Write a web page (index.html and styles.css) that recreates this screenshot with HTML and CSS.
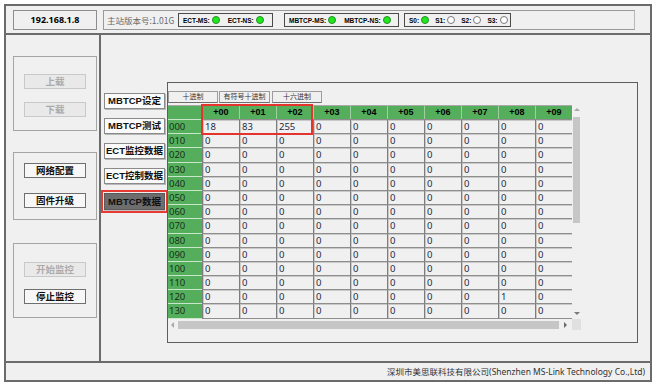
FILE: index.html
```html
<!DOCTYPE html>
<html lang="zh-CN">

<head>
    <meta charset="UTF-8">
    <meta name="viewport" content="width=device-width, initial-scale=1.0">
    <title>MBTCP数据</title>
    <link rel="stylesheet" href="styles.css">
</head>

<body>
    <div class="app">
        <!-- Top status bar -->
        <header class="topbar">
            <div class="ip-box">192.168.1.8</div>
            <div class="status-box">
                <span class="version">主站版本号:1.01G</span>
                <div class="leds leds-ect">
                    <span class="led-label">ECT-MS:</span><span class="led on"></span>
                    <span class="led-label next">ECT-NS:</span><span class="led on"></span>
                </div>
                <div class="leds leds-mbtcp">
                    <span class="led-label">MBTCP-MS:</span><span class="led on"></span>
                    <span class="led-label next">MBTCP-NS:</span><span class="led on"></span>
                </div>
                <div class="leds leds-slot">
                    <span class="led-label">S0:</span><span class="led on"></span>
                    <span class="led-label next">S1:</span><span class="led"></span>
                    <span class="led-label next">S2:</span><span class="led"></span>
                    <span class="led-label next">S3:</span><span class="led"></span>
                </div>
            </div>
        </header>

        <div class="main">
            <!-- Left command panel -->
            <aside class="side">
                <div class="group group-load">
                    <button class="btn off">上载</button>
                    <button class="btn off">下载</button>
                </div>
                <div class="group group-config">
                    <button class="btn">网络配置</button>
                    <button class="btn">固件升级</button>
                </div>
                <div class="group group-monitor">
                    <button class="btn off">开始监控</button>
                    <button class="btn">停止监控</button>
                </div>
            </aside>

            <section class="content">
                <nav class="nav">
                    <button class="nav-btn">MBTCP设定</button>
                    <button class="nav-btn">MBTCP测试</button>
                    <button class="nav-btn">ECT监控数据</button>
                    <button class="nav-btn">ECT控制数据</button>
                    <button class="nav-btn active">MBTCP数据</button>
                </nav>

                <div class="panel">
                    <div class="radix">
                        <span class="radix-tab w50">十进制</span>
                        <span class="radix-tab w51">有符号十进制</span>
                        <span class="radix-tab w50 last">十六进制</span>
                    </div>

                    <div class="sheet">
                        <div class="view">
                            <div class="cells">
                                <div class="hc"></div><div class="h">+00</div><div class="h">+01</div><div class="h">+02</div><div class="h">+03</div><div class="h">+04</div><div class="h">+05</div><div class="h">+06</div><div class="h">+07</div><div class="h">+08</div><div class="h">+09</div>
                                <div class="r">000</div><div class="c">18</div><div class="c">83</div><div class="c">255</div><div class="c">0</div><div class="c">0</div><div class="c">0</div><div class="c">0</div><div class="c">0</div><div class="c">0</div><div class="c">0</div>
                                <div class="r">010</div><div class="c">0</div><div class="c">0</div><div class="c">0</div><div class="c">0</div><div class="c">0</div><div class="c">0</div><div class="c">0</div><div class="c">0</div><div class="c">0</div><div class="c">0</div>
                                <div class="r">020</div><div class="c">0</div><div class="c">0</div><div class="c">0</div><div class="c">0</div><div class="c">0</div><div class="c">0</div><div class="c">0</div><div class="c">0</div><div class="c">0</div><div class="c">0</div>
                                <div class="r">030</div><div class="c">0</div><div class="c">0</div><div class="c">0</div><div class="c">0</div><div class="c">0</div><div class="c">0</div><div class="c">0</div><div class="c">0</div><div class="c">0</div><div class="c">0</div>
                                <div class="r">040</div><div class="c">0</div><div class="c">0</div><div class="c">0</div><div class="c">0</div><div class="c">0</div><div class="c">0</div><div class="c">0</div><div class="c">0</div><div class="c">0</div><div class="c">0</div>
                                <div class="r">050</div><div class="c">0</div><div class="c">0</div><div class="c">0</div><div class="c">0</div><div class="c">0</div><div class="c">0</div><div class="c">0</div><div class="c">0</div><div class="c">0</div><div class="c">0</div>
                                <div class="r">060</div><div class="c">0</div><div class="c">0</div><div class="c">0</div><div class="c">0</div><div class="c">0</div><div class="c">0</div><div class="c">0</div><div class="c">0</div><div class="c">0</div><div class="c">0</div>
                                <div class="r">070</div><div class="c">0</div><div class="c">0</div><div class="c">0</div><div class="c">0</div><div class="c">0</div><div class="c">0</div><div class="c">0</div><div class="c">0</div><div class="c">0</div><div class="c">0</div>
                                <div class="r">080</div><div class="c">0</div><div class="c">0</div><div class="c">0</div><div class="c">0</div><div class="c">0</div><div class="c">0</div><div class="c">0</div><div class="c">0</div><div class="c">0</div><div class="c">0</div>
                                <div class="r">090</div><div class="c">0</div><div class="c">0</div><div class="c">0</div><div class="c">0</div><div class="c">0</div><div class="c">0</div><div class="c">0</div><div class="c">0</div><div class="c">0</div><div class="c">0</div>
                                <div class="r">100</div><div class="c">0</div><div class="c">0</div><div class="c">0</div><div class="c">0</div><div class="c">0</div><div class="c">0</div><div class="c">0</div><div class="c">0</div><div class="c">0</div><div class="c">0</div>
                                <div class="r">110</div><div class="c">0</div><div class="c">0</div><div class="c">0</div><div class="c">0</div><div class="c">0</div><div class="c">0</div><div class="c">0</div><div class="c">0</div><div class="c">0</div><div class="c">0</div>
                                <div class="r">120</div><div class="c">0</div><div class="c">0</div><div class="c">0</div><div class="c">0</div><div class="c">0</div><div class="c">0</div><div class="c">0</div><div class="c">0</div><div class="c">1</div><div class="c">0</div>
                                <div class="r">130</div><div class="c">0</div><div class="c">0</div><div class="c">0</div><div class="c">0</div><div class="c">0</div><div class="c">0</div><div class="c">0</div><div class="c">0</div><div class="c">0</div><div class="c">0</div>
                                <!-- next row, only its top edge is in view -->
                                <div class="r"></div><div class="c"></div><div class="c"></div><div class="c"></div><div class="c"></div><div class="c"></div><div class="c"></div><div class="c"></div><div class="c"></div><div class="c"></div><div class="c"></div>
                            </div>
                        </div>

                        <!-- Scrollbars -->
                        <div class="vscroll">
                            <span class="arrow arrow-up"></span>
                            <span class="vthumb"></span>
                            <span class="arrow arrow-down"></span>
                        </div>
                        <div class="hscroll">
                            <span class="arrow arrow-left"></span>
                            <span class="hthumb"></span>
                            <span class="arrow arrow-right"></span>
                        </div>
                        <div class="corner"></div>

                        <!-- Highlight of the first three registers -->
                        <div class="mark"></div>
                    </div>
                </div>
            </section>
        </div>

        <footer class="footer">深圳市美思联科技有限公司(Shenzhen MS-Link Technology Co.,Ltd)</footer>
    </div>
</body>

</html>
```

FILE: styles.css
```css
/* General Reset */
* {
    margin: 0;
    padding: 0;
    box-sizing: border-box;
}

body {
    background: #fff;
    font-family: "Noto Sans", "Noto Sans CJK SC", sans-serif;
    color: #000;
}

button {
    font-family: "Liberation Sans", "Noto Sans CJK SC", sans-serif;
    cursor: pointer;
}

/* Window frame */
.app {
    width: 648px;
    height: 378px;
    margin: 4px 0 0 4px;
    border: 2px solid #6b6b6b;
    background: #f0f0f0;
    display: flex;
    flex-direction: column;
}

/* Top bar */
.topbar {
    height: 29px;
    border-bottom: 2px solid #6b6b6b;
    display: flex;
    align-items: flex-start;
    gap: 6px;
    padding: 4px 0 0 7px;
}

.ip-box {
    width: 84px;
    height: 20px;
    border: 1px solid #8d8d8d;
    font-size: 9px;
    font-weight: bold;
    line-height: 18px;
    text-align: center;
}

.status-box {
    width: 532px;
    height: 20px;
    border: 1px solid #9a9a9a;
    border-right-color: #b8b8b8;
    display: flex;
    align-items: center;
    padding-left: 3px;
}

.version {
    width: 71px;
    font-family: "Noto Sans CJK SC", sans-serif;
    font-size: 8.5px;
    color: #6a6a6a;
    white-space: nowrap;
}

.leds {
    height: 14px;
    border: 1px solid #4a4a4a;
    display: flex;
    align-items: center;
    padding-left: 4px;
}

.leds-ect {
    width: 95px;
}

.leds-mbtcp {
    width: 115px;
    margin-left: 11px;
}

.leds-slot {
    width: 107px;
    margin-left: 5px;
}

.led-label {
    font-family: "Liberation Sans", sans-serif;
    font-size: 6.5px;
    font-weight: bold;
    margin-right: 2px;
}

.led-label.next {
    margin-left: 8px;
}

.leds-slot .led-label.next {
    margin-left: 6px;
}

.led {
    width: 8px;
    height: 8px;
    border-radius: 50%;
    border: 1px solid #7a7a7a;
    background: #fff;
}

.led.on {
    background: #1ee81e;
    border-color: #2a8c2a;
}

/* Main area */
.main {
    flex: 1;
    display: flex;
}

.side {
    width: 95px;
    border-right: 2px solid #6b6b6b;
    padding-left: 7px;
}

.group {
    width: 84px;
    border: 1px solid #a5a5a5;
    display: flex;
    flex-direction: column;
    align-items: center;
}

.group-load {
    margin-top: 21px;
    height: 75px;
    padding-top: 17px;
    gap: 13px;
}

.group-config {
    margin-top: 21px;
    height: 68px;
    padding-top: 10px;
    gap: 15px;
}

.group-monitor {
    margin-top: 23px;
    height: 75px;
    padding-top: 18px;
    gap: 12px;
}

.btn {
    width: 62px;
    height: 15px;
    border: 1px solid #6f6f6f;
    background: #f7f7f7;
    font-size: 9.5px;
    font-weight: bold;
    line-height: 13px;
    color: #111;
}

.btn.off {
    color: #ababab;
    border-color: #c9c9c9;
    background: #e9e9e9;
    cursor: default;
}

/* Content */
.content {
    flex: 1;
    display: flex;
    align-items: flex-start;
    gap: 2px;
    padding-left: 3px;
}

.nav {
    width: 61px;
    margin-top: 58px;
    display: flex;
    flex-direction: column;
    gap: 9px;
}

.nav-btn {
    height: 16px;
    border: 1px solid #8a8a8a;
    background: #fafafa;
    box-shadow: 1px 1px 0 #b8b8b8;
    font-size: 9.5px;
    font-weight: bold;
    line-height: 14px;
    color: #111;
}

.nav-btn.active {
    height: 17px;
    background: #6d6d6d;
    border-color: #5a5a5a;
    box-shadow: 0 2px 0 #c4c4c4;
    outline: 2px solid #e63b35;
    outline-offset: 1px;
}

.panel {
    width: 471px;
    height: 261px;
    margin-top: 47px;
    border: 1px solid #5e5e5e;
    padding-top: 8px;
}

.radix {
    display: flex;
    gap: 1px;
    height: 12px;
    margin-bottom: 2px;
}

.radix-tab {
    border: 1px solid #9c9c9c;
    border-bottom-color: #6e6e6e;
    font-size: 7px;
    line-height: 10px;
    text-align: center;
    color: #333;
}

.radix-tab.w50 {
    width: 50px;
}

.radix-tab.w51 {
    width: 51px;
}

.radix-tab.last {
    margin-left: 1px;
}

/* Register sheet */
.sheet {
    position: relative;
    display: grid;
    grid-template-columns: 404px 9px;
    grid-template-rows: 214px 11px;
}

.view {
    overflow: hidden;
}

.cells {
    display: grid;
    grid-template-columns: 34px repeat(10, 37px);
    grid-template-rows: 14px repeat(15, 14.2px);
    font-size: 9.5px;
}

.hc,
.h,
.r {
    background: #54ae5c;
}

.h {
    border-left: 1px solid #9fcfa3;
    border-top: 1px solid #a8a8a8;
    font-family: "Liberation Sans", sans-serif;
    font-size: 9px;
    font-weight: bold;
    text-align: center;
    line-height: 12px;
}

.hc {
    border-top: 1px solid #a8a8a8;
}

.r {
    border-top: 1px solid #c8e6ca;
    padding-left: 1px;
    line-height: 13px;
    color: #15301a;
}

.c {
    background: #f0f0f0;
    border-left: 1px solid #7d7d7d;
    border-top: 1px solid #8e8e8e;
    box-shadow: inset 1px 1px 0 #c9c9c9;
    padding-left: 2px;
    line-height: 13px;
    color: #1e2a44;
}

.mark {
    position: absolute;
    left: 33px;
    top: -1px;
    width: 112px;
    height: 31px;
    border: 2px solid #e5332d;
}

/* Scrollbars */
.vscroll {
    display: flex;
    flex-direction: column;
    align-items: center;
    padding: 3px 0 4px;
}

.vthumb {
    width: 7px;
    height: 106px;
    margin-top: 6px;
    background: #c6c6c6;
}

.hscroll {
    display: flex;
    align-items: center;
    padding: 0 5px 0 3px;
}

.hthumb {
    width: 381px;
    height: 8px;
    margin-left: 4px;
    background: #c6c6c6;
}

.arrow {
    width: 0;
    height: 0;
    border: 3px solid transparent;
}

.arrow-up {
    border-top: 0;
    border-bottom-color: #a9a9a9;
}

.arrow-down {
    margin-top: auto;
    border-bottom: 0;
    border-top-color: #7a7a7a;
}

.arrow-left {
    border-left: 0;
    border-right-color: #a9a9a9;
}

.arrow-right {
    margin-left: auto;
    border-right: 0;
    border-left-color: #6a6a6a;
}

.corner {
    background: #e0e0e0;
}

/* Footer */
.footer {
    height: 19px;
    border-top: 2px solid #6b6b6b;
    padding-right: 5px;
    text-align: right;
    font-size: 8.5px;
    line-height: 17px;
    color: #333;
}
```
